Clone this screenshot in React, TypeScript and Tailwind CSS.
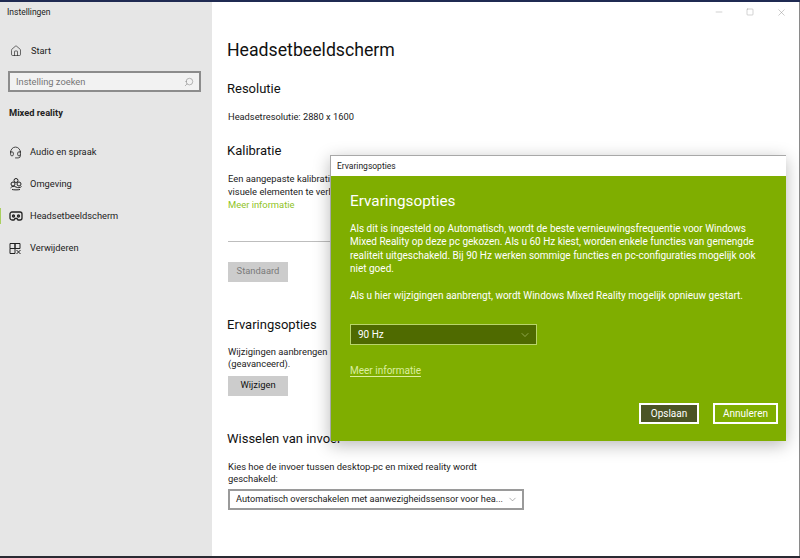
import React from "react";
import { Home, Search, Headset, ChevronDown, Minus, Square, X } from "lucide-react";

const font = "font-['Roboto','Open_Sans',sans-serif]";

const EnvIcon = () => (
  <svg width="14" height="14" viewBox="0 0 14 14" fill="none" stroke="#222" strokeWidth="1">
    <circle cx="7" cy="3.500" r="2" />
    <circle cx="4" cy="7" r="2" />
    <circle cx="10" cy="7" r="2" />
    <path d="M1.500 11c1.500-2 3.500-2 5.500-1s4 1 5.500-.5M3 12.500c2 .5 6 .5 8 0" />
  </svg>
);

const HeadsetIcon = () => (
  <svg width="14" height="12" viewBox="0 0 14 12" fill="none" stroke="#222" strokeWidth="1.300">
    <path d="M3 2h8a2 2 0 0 1 2 2v4a2 2 0 0 1-2 2h-2l-1-1.500H6L5 10H3a2 2 0 0 1-2-2V4a2 2 0 0 1 2-2z" />
    <circle cx="4.500" cy="6" r="1" />
    <circle cx="9.500" cy="6" r="1" />
  </svg>
);

const RemoveIcon = () => (
  <svg width="13" height="13" viewBox="0 0 13 13" fill="none" stroke="#222" strokeWidth="1">
    <path d="M1 1.500h5v5H1zM1 6.500h5v5H1zM6 1.500h5v5H6zM7.500 8l4 4M11.500 8l-4 4" />
  </svg>
);

const navItems = [
  { label: "Audio en spraak", icon: <Headset size={13} strokeWidth={1.500} color="#222" /> },
  { label: "Omgeving", icon: <EnvIcon /> },
  { label: "Headsetbeeldscherm", icon: <HeadsetIcon />, active: true },
  { label: "Verwijderen", icon: <RemoveIcon /> },
];

const Sidebar = () => (
  <aside className="w-[212px] shrink-0 bg-[#e6e6e6] flex flex-col">
    <div className="h-[21px] pl-[7px] flex items-center text-[8.500px] text-[#222]">Instellingen</div>
    <div className="mt-[16px] h-[24px] flex items-center pl-[10px] gap-[9px] text-[9.300px] text-[#222]">
      <Home size={12} strokeWidth={1.300} />
      <span>Start</span>
    </div>
    <div className="mt-[8px] ml-[8px] mr-[11px] h-[21px] border-2 border-[#8c8c8c] bg-[#f2f2f2] flex items-center justify-between pl-[6px] pr-[5px] text-[9.300px] text-[#767676]">
      <span>Instelling zoeken</span>
      <Search size={10} strokeWidth={1.200} className="-scale-x-100" />
    </div>
    <div className="mt-[13px] pl-[9px] text-[9.300px] font-bold leading-[16px] text-[#222]">Mixed reality</div>
    <div className="mt-[15px] flex flex-col">
      {navItems.map((item) => (
        <div key={item.label} className="h-[32px] flex items-center relative pl-[9px] text-[9.300px] text-[#222]">
          {item.active && <div className="absolute left-0 top-[8px] h-[16px] w-[1px] bg-[#a9cf5f]" />}
          <span className="w-[21px] flex">{item.icon}</span>
          <span>{item.label}</span>
        </div>
      ))}
    </div>
  </aside>
);

const SectionTitle = ({ children, className }: { children: React.ReactNode; className: string }) => (
  <div className={`text-[13px] leading-[20px] text-[#111] ${className}`}>{children}</div>
);

const Content = () => (
  <main className="flex-1 bg-white relative pl-[15px] pr-[2px]">
    <div className="flex justify-end h-[20px] items-center gap-[22px] pr-[10px] text-[#8f8f8f]">
      <Minus size={10} strokeWidth={1} />
      <Square size={8} strokeWidth={1.200} />
      <X size={11} strokeWidth={1} />
    </div>
    <h1 className="mt-[14px] text-[17.700px] leading-[28px] text-[#111]">Headsetbeeldscherm</h1>
    <SectionTitle className="mt-[15px]">Resolutie</SectionTitle>
    <p className="mt-[11px] pl-[1px] text-[9.300px] leading-[13px] text-[#222]">Headsetresolutie: 2880 x 1600</p>
    <SectionTitle className="mt-[18px]">Kalibratie</SectionTitle>
    <div className="mt-[12px] pl-[1px] text-[9.400px] leading-[12.500px] text-[#222]">
      <p>Een aangepaste kalibratie kan helpen</p>
      <p>visuele elementen te verbeteren</p>
      <p className="mt-[1px] text-[#8fc31f]">Meer informatie</p>
    </div>
    <div className="mt-[29px] ml-[1px] w-[296px] h-[1px] bg-[#bdbdbd]" />
    <button className={`mt-[20px] ml-[1px] w-[60px] h-[20px] bg-[#cccccc] text-[9.400px] text-[#7a7a7a] ${font}`}>Standaard</button>
    <SectionTitle className="mt-[33px]">Ervaringsopties</SectionTitle>
    <div className="mt-[11px] pl-[1px] text-[9.400px] leading-[12.500px] text-[#222]">
      <p>Wijzigingen aanbrengen in de</p>
      <p>(geavanceerd).</p>
    </div>
    <button className={`mt-[5px] ml-[1px] w-[60px] h-[20px] bg-[#cccccc] text-[9.400px] text-[#111] ${font}`}>Wijzigen</button>
    <SectionTitle className="mt-[33px]">Wisselen van invoer</SectionTitle>
    <div className="mt-[12px] pl-[1px] w-[260px] text-[9.400px] leading-[12.500px] text-[#222]">
      Kies hoe de invoer tussen desktop-pc en mixed reality wordt geschakeld:
    </div>
    <div className="mt-[3px] ml-[1px] w-[296px] h-[21px] border-2 border-[#9a9a9a] flex items-center justify-between pl-[6px] pr-[4px] text-[9.200px] text-[#222] bg-white">
      <span className="whitespace-nowrap">Automatisch overschakelen met aanwezigheidssensor voor hea...</span>
      <ChevronDown size={11} strokeWidth={1} color="#555" className="shrink-0" />
    </div>
  </main>
);

const Dialog = () => (
  <div className="absolute left-[330px] top-[155px] w-[456px] h-[286px] border border-[#a8a8a8] border-b-0 border-r-0 shadow-[0_4px_16px_rgba(0,0,0,0.28)] flex flex-col">
    <div className="h-[20px] bg-white pl-[6px] flex items-center text-[8.500px] text-[#222]">Ervaringsopties</div>
    <div className="flex-1 bg-[#7fae00] px-[19px] text-white flex flex-col relative">
      <h2 className="mt-[14px] text-[15.300px] leading-[22px]">Ervaringsopties</h2>
      <div className="mt-[10px] w-[420px] text-[10px] leading-[13.400px]">
        <p>Als dit is ingesteld op Automatisch, wordt de beste vernieuwingsfrequentie voor Windows Mixed Reality op deze pc gekozen. Als u 60 Hz kiest, worden enkele functies van gemengde realiteit uitgeschakeld. Bij 90 Hz werken sommige functies en pc-configuraties mogelijk ook niet goed.</p>
        <p className="mt-[13px]">Als u hier wijzigingen aanbrengt, wordt Windows Mixed Reality mogelijk opnieuw gestart.</p>
      </div>
      <div className="mt-[22px] w-[187px] h-[21px] border border-[#b9d56a] bg-[#4f6a00] flex items-center justify-between pl-[7px] pr-[5px] text-[10px]">
        <span>90 Hz</span>
        <ChevronDown size={12} strokeWidth={1} color="#cfe39a" />
      </div>
      <div className="mt-[18px] text-[10px] text-[#dcefa0] underline underline-offset-2">Meer informatie</div>
      <div className="absolute right-[8px] bottom-[17px] flex gap-[14px]">
        <button className={`w-[60px] h-[21px] border-2 border-white bg-[#4b5425] text-[10px] text-white ${font}`}>Opslaan</button>
        <button className={`w-[65px] h-[21px] border-2 border-white text-[10px] text-white ${font}`}>Annuleren</button>
      </div>
    </div>
  </div>
);

export default function App() {
  return (
    <div className={`w-[800px] h-[558px] relative overflow-hidden flex flex-col bg-white ${font}`}>
      <div className="h-[2px] bg-[#1f2a52] shrink-0" />
      <div className="flex flex-1 min-h-0">
        <Sidebar />
        <Content />
        <div className="w-[1px] bg-[#8a8a8a]" />
      </div>
      <div className="h-[2px] bg-[#2a2a33] shrink-0" />
      <Dialog />
    </div>
  );
}
